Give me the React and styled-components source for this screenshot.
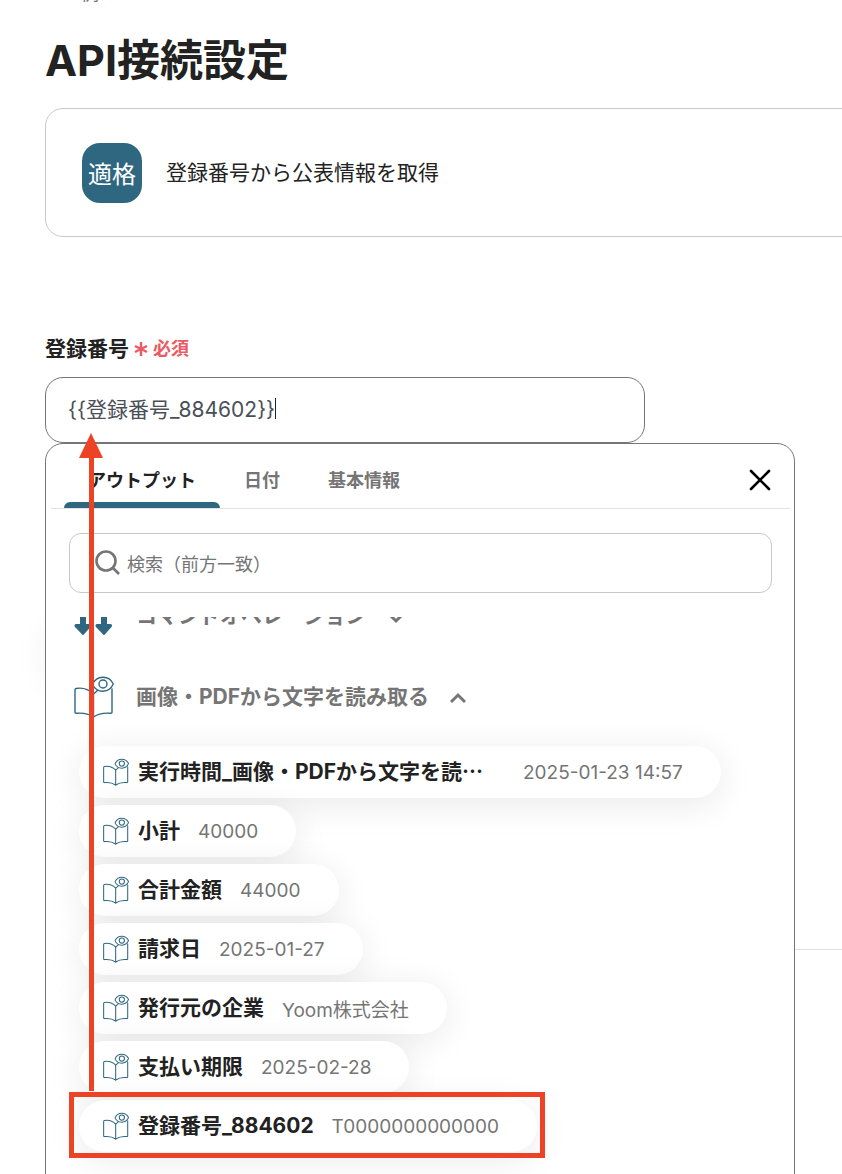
import React from "react";
import styled, { createGlobalStyle, css } from "styled-components";

const GlobalStyle = createGlobalStyle`
  * {
    box-sizing: border-box;
  }

  body {
    margin: 0;
    background: #fff;
    color: #222;
    font-family: Inter, "Noto Sans CJK JP", sans-serif;
    font-size: 21px;
  }

  button, input {
    margin: 0;
    padding: 0;
    border: 0;
    background: none;
    font: inherit;
    color: inherit;
  }
`;

const colors = {
  primary: "#2f6780",
  text: "#222",
  muted: "#757575",
  border: "#c9c9c9",
  line: "#e2e2e2",
  danger: "#ec5a63",
  marker: "#ec4226"
};

const Page = styled.main`
  height: 100vh;
  padding: 0 0 0 45px;
  overflow: hidden;
`;

const Crumb = styled.p`
  height: 2px;
  margin: 0 0 28px 36px;
  overflow: hidden;
  display: flex;
  align-items: flex-end;
  font-size: 18px;
  line-height: 16px;
  color: ${colors.muted};
`;

const Title = styled.h1`
  margin: 0 0 18px;
  font-size: 43px;
  line-height: 60px;
  font-weight: 700;
`;

const ActionCard = styled.section`
  display: flex;
  align-items: center;
  gap: 24px;
  height: 129px;
  margin-right: -24px;
  padding: 0 36px;
  border: 1px solid ${colors.border};
  border-radius: 18px;
`;

const ActionIcon = styled.div`
  display: flex;
  align-items: center;
  justify-content: center;
  width: 60px;
  height: 60px;
  border-radius: 18px;
  background: ${colors.primary};
  color: #fff;
  font-size: 24px;
`;

const Label = styled.span`
  padding-bottom: 4px;
`;

const Field = styled.div`
  position: relative;
  width: 600px;
  max-width: 100%;
  margin-top: 96px;
`;

const FieldLabel = styled.label`
  display: flex;
  align-items: center;
  gap: 5px;
  height: 32px;
  margin-bottom: 12px;
  padding-bottom: 4px;
  font-weight: 700;
`;

const Required = styled.span`
  display: flex;
  align-items: center;
  gap: 5px;
  font-size: 18px;
  color: ${colors.danger};

  svg {
    margin-top: 4px;
  }
`;

const InputBox = styled.div`
  display: flex;
  align-items: center;
  height: 66px;
  padding: 0 22px 4px;
  border: 1px solid ${colors.muted};
  border-radius: 18px;
  color: #4a4f57;
`;

const TextInput = styled.input`
  field-sizing: content;
  height: 32px;
  outline: none;
`;

const Caret = styled.span`
  width: 1px;
  height: 21px;
  background: ${colors.text};
`;

const Popover = styled.div`
  position: absolute;
  top: 100%;
  left: 0;
  width: 750px;
  height: 900px;
  border: 1px solid ${colors.muted};
  border-radius: 18px;
  background: #fff;
`;

const TabBar = styled.div`
  display: flex;
  align-items: stretch;
  height: 65px;
  margin: 0 4px 0 5px;
  padding: 0 10px 0 13px;
  border-bottom: 1px solid ${colors.line};
`;

const Tab = styled.button`
  position: relative;
  padding: 5px 24px 0;
  font-size: 18px;
  font-weight: 700;
  color: ${colors.muted};
  cursor: pointer;

  ${props =>
    props.$active &&
    css`
      color: ${colors.text};

      &::after {
        content: "";
        position: absolute;
        left: 0;
        right: 0;
        bottom: 0;
        height: 6px;
        border-radius: 6px 6px 0 0;
        background: ${colors.primary};
      }
    `}
`;

const CloseButton = styled.button`
  display: flex;
  align-items: center;
  justify-content: center;
  width: 40px;
  margin-left: auto;
  padding-top: 8px;
  color: #000;
  cursor: pointer;
`;

const SearchBox = styled.label`
  display: flex;
  align-items: center;
  gap: 7px;
  height: 60px;
  margin: 24px 22px 24px 23px;
  padding: 0 24px;
  border: 1px solid ${colors.border};
  border-radius: 12px;
  color: ${colors.muted};
`;

const SearchInput = styled.input`
  flex: 1;
  height: 32px;
  padding-top: 2px;
  outline: none;
  font-size: 18px;

  &::placeholder {
    color: ${colors.muted};
    opacity: 1;
  }
`;

const ListViewport = styled.div`
  height: 720px;
  overflow: hidden;
`;

const OutputList = styled.div`
  margin-top: -22px;
  padding: 0 28px;
`;

const GroupHeader = styled.button`
  display: flex;
  align-items: center;
  height: 42px;
  margin-bottom: 39px;
  font-weight: 700;
  color: ${colors.muted};
  cursor: pointer;

  svg:first-child {
    margin-right: 22px;
    color: ${colors.primary};
  }

  svg:last-child {
    margin-left: 21px;
  }
`;

const Items = styled.ul`
  display: flex;
  flex-direction: column;
  align-items: flex-start;
  gap: 7px;
  margin: -11px 0 0 5px;
  padding: 0;
  list-style: none;
`;

const Item = styled.li`
  position: relative;
`;

const Pill = styled.button`
  display: flex;
  align-items: center;
  height: 52px;
  padding: 0 38px 0 24px;
  border-radius: 26px;
  background: #fff;
  box-shadow: 0 6px 36px rgba(0, 0, 0, 0.09);
  cursor: pointer;

  svg {
    color: ${colors.primary};
  }
`;

const ItemName = styled(Label)`
  min-width: ${props => (props.$truncated ? "367px" : "auto")};
  margin: 0 18px 0 9px;
  text-align: left;
  font-weight: 700;
`;

const Ellipsis = styled.span`
  font-family: "Noto Sans CJK JP", sans-serif;
`;

const ItemValue = styled.span`
  font-size: 19px;
  color: ${colors.muted};
`;

const Highlight = styled.div`
  position: absolute;
  inset: -8px -8px -6px -10px;
  border: 5px solid ${colors.marker};
  pointer-events: none;
`;

const Arrow = styled.div`
  position: absolute;
  top: -11px;
  left: 33px;
  display: flex;
  flex-direction: column;
  align-items: center;
  height: 658px;
  pointer-events: none;
  color: ${colors.marker};

  &::after {
    content: "";
    flex: 1;
    width: 5px;
    background: ${colors.marker};
  }
`;

// sits under the open popover, only its soft edge shows
const Backdrop = styled.div`
  width: 240px;
  height: 60px;
  margin-top: 176px;
  border-radius: 30px;
  box-shadow: 0 6px 36px rgba(0, 0, 0, 0.07);
`;

const Divider = styled.hr`
  height: 1px;
  margin: 270px 0 0;
  border: 0;
  background: ${colors.line};
`;

const BookEyeIcon = ({ size, strokeWidth }) => (
  <svg
    width={size}
    height={size + 2}
    viewBox="0 0 40 42"
    fill="none"
    stroke="currentColor"
    strokeWidth={strokeWidth}
    strokeLinecap="round"
    strokeLinejoin="round"
    aria-hidden="true"
  >
    <path d="M19.5 18C15 13.5 8 11.5 2 12.5Q1 12.7 1 14V36Q1 37.5 2.5 37.3C9 36.6 15 38 19.5 41C24 38 30 36.6 36.5 37.3Q38 37.5 38 36V13" />
    <path d="M19.5 18V41M19.5 18L23.5 14.5" />
    <path d="M18.5 8.5C22.5 -1 35 -1 39.3 8C35 17.5 23 17.5 18.5 8.5Z" />
    <circle cx="29" cy="8" r="4" />
  </svg>
);

const CommandIcon = () => (
  <svg width="40" height="40" viewBox="0 0 40 40" fill="currentColor" aria-hidden="true">
    <path d="M6 4H12V28H15.5Q18 28.5 16.5 31L9.8 38.5Q9 39.5 8.2 38.5L1 31Q-0.5 28.5 2 28H6Z" />
    <path d="M27 4H33V28H36.5Q39 28.5 37.5 31L30.8 38.5Q30 39.5 29.2 38.5L22 31Q20.5 28.5 23 28H27Z" />
  </svg>
);

const Chevron = ({ up }) => (
  <svg
    width="16"
    height="16"
    viewBox="0 0 16 16"
    fill="none"
    stroke="currentColor"
    strokeWidth="3"
    aria-hidden="true"
  >
    <path d={up ? "M1 13L8 6L15 13" : "M1 6L8 13L15 6"} />
  </svg>
);

const SearchIcon = () => (
  <svg
    width="26"
    height="26"
    viewBox="0 0 26 26"
    fill="none"
    stroke="currentColor"
    strokeWidth="2.6"
    aria-hidden="true"
  >
    <circle cx="12" cy="11" r="9.5" />
    <path d="M18.5 17.5L25 24" />
  </svg>
);

const items = [
  {
    name: "実行時間_画像・PDFから文字を読",
    value: "2025-01-23 14:57",
    truncated: true
  },
  { name: "小計", value: "40000" },
  { name: "合計金額", value: "44000" },
  { name: "請求日", value: "2025-01-27" },
  { name: "発行元の企業", value: "Yoom株式会社" },
  { name: "支払い期限", value: "2025-02-28" },
  { name: "登録番号_884602", value: "T0000000000000", highlighted: true }
];

const OutputPicker = () => (
  <Popover>
    <TabBar role="tablist">
      <Tab type="button" role="tab" aria-selected="true" $active>
        アウトプット
      </Tab>
      <Tab type="button" role="tab" aria-selected="false">
        日付
      </Tab>
      <Tab type="button" role="tab" aria-selected="false">
        基本情報
      </Tab>
      <CloseButton type="button" aria-label="閉じる">
        <svg
          width="22"
          height="22"
          viewBox="0 0 22 22"
          stroke="currentColor"
          strokeWidth="2.6"
          strokeLinecap="round"
        >
          <path d="M2 2L20 20M20 2L2 20" />
        </svg>
      </CloseButton>
    </TabBar>
    <SearchBox htmlFor="output-search">
      <SearchIcon />
      <SearchInput
        id="output-search"
        type="text"
        placeholder="検索（前方一致）"
      />
    </SearchBox>
    <ListViewport>
      <OutputList>
        <GroupHeader type="button" aria-expanded="false">
          <CommandIcon />
          <Label>コマンドオペレーション</Label>
          <Chevron />
        </GroupHeader>
        <GroupHeader type="button" aria-expanded="true">
          <BookEyeIcon size={40} strokeWidth={1.4} />
          <Label>画像・PDFから文字を読み取る</Label>
          <Chevron up />
        </GroupHeader>
        <Items>
          {items.map(item => (
            <Item key={item.name}>
              <Pill type="button">
                <BookEyeIcon size={26} strokeWidth={1.6} />
                <ItemName $truncated={item.truncated}>
                  {item.name}
                  {item.truncated && <Ellipsis>…</Ellipsis>}
                </ItemName>
                <ItemValue>{item.value}</ItemValue>
              </Pill>
              {item.highlighted && <Highlight />}
            </Item>
          ))}
        </Items>
      </OutputList>
    </ListViewport>
    <Arrow>
      <svg
        width="24"
        height="25"
        viewBox="0 0 24 25"
        fill="currentColor"
        aria-hidden="true"
      >
        <path d="M12 0L24 25H0Z" />
      </svg>
    </Arrow>
  </Popover>
);

export default class App extends React.Component {
  state = { value: "{{登録番号_884602}}" };

  handleChange = e => this.setState({ value: e.target.value });

  render() {
    return (
      <Page lang="ja">
        <GlobalStyle />
        <Crumb>例</Crumb>
        <Title>API接続設定</Title>
        <ActionCard>
          <ActionIcon>適格</ActionIcon>
          <Label>登録番号から公表情報を取得</Label>
        </ActionCard>
        <Field>
          <FieldLabel htmlFor="registration-number">
            登録番号
            <Required>
              <svg
                width="14"
                height="14"
                viewBox="0 0 14 14"
                stroke="currentColor"
                strokeWidth="2.4"
                aria-hidden="true"
              >
                <path d="M7 0V14M1 4L13 10M13 4L1 10" />
              </svg>
              必須
            </Required>
          </FieldLabel>
          <InputBox>
            <TextInput
              id="registration-number"
              type="text"
              value={this.state.value}
              onChange={this.handleChange}
            />
            <Caret />
          </InputBox>
          <OutputPicker />
        </Field>
        <Backdrop />
        <Divider />
      </Page>
    );
  }
}
